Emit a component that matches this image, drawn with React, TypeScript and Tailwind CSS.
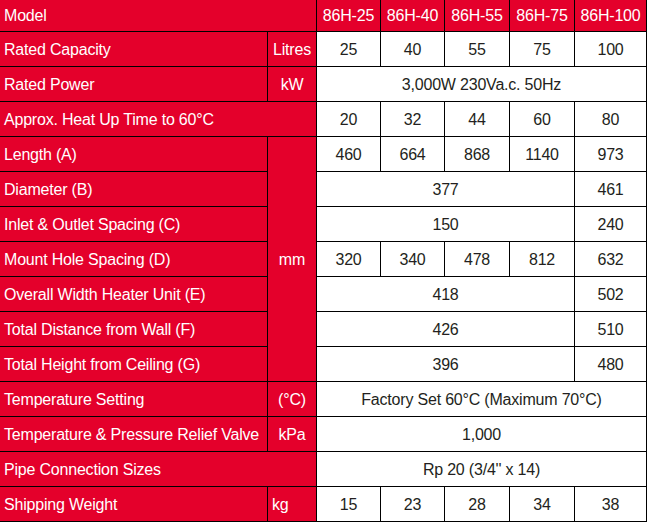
import React from 'react';

type Cell = {
  text: string;
  span?: number;
  rowSpan?: number;
  red?: boolean;
  align?: 'left' | 'center';
};

const red = 'bg-[#e4002b] text-white';
const white = 'bg-white text-[#231f20]';

const rows: Cell[][] = [
  [
    { text: 'Model', span: 2, red: true, align: 'left' },
    { text: '86H-25', red: true },
    { text: '86H-40', red: true },
    { text: '86H-55', red: true },
    { text: '86H-75', red: true },
    { text: '86H-100', red: true },
  ],
  [
    { text: 'Rated Capacity', red: true, align: 'left' },
    { text: 'Litres', red: true },
    { text: '25' }, { text: '40' }, { text: '55' }, { text: '75' }, { text: '100' },
  ],
  [
    { text: 'Rated Power', red: true, align: 'left' },
    { text: 'kW', red: true },
    { text: '3,000W 230Va.c. 50Hz', span: 5 },
  ],
  [
    { text: 'Approx. Heat Up Time to 60°C', span: 2, red: true, align: 'left' },
    { text: '20' }, { text: '32' }, { text: '44' }, { text: '60' }, { text: '80' },
  ],
  [
    { text: 'Length (A)', red: true, align: 'left' },
    { text: 'mm', red: true, rowSpan: 7 },
    { text: '460' }, { text: '664' }, { text: '868' }, { text: '1140' }, { text: '973' },
  ],
  [
    { text: 'Diameter (B)', red: true, align: 'left' },
    { text: '377', span: 4 }, { text: '461' },
  ],
  [
    { text: 'Inlet & Outlet Spacing (C)', red: true, align: 'left' },
    { text: '150', span: 4 }, { text: '240' },
  ],
  [
    { text: 'Mount Hole Spacing (D)', red: true, align: 'left' },
    { text: '320' }, { text: '340' }, { text: '478' }, { text: '812' }, { text: '632' },
  ],
  [
    { text: 'Overall Width Heater Unit (E)', red: true, align: 'left' },
    { text: '418', span: 4 }, { text: '502' },
  ],
  [
    { text: 'Total Distance from Wall (F)', red: true, align: 'left' },
    { text: '426', span: 4 }, { text: '510' },
  ],
  [
    { text: 'Total Height from Ceiling (G)', red: true, align: 'left' },
    { text: '396', span: 4 }, { text: '480' },
  ],
  [
    { text: 'Temperature Setting', red: true, align: 'left' },
    { text: '(°C)', red: true },
    { text: 'Factory Set 60°C (Maximum 70°C)', span: 5 },
  ],
  [
    { text: 'Temperature & Pressure Relief Valve', red: true, align: 'left' },
    { text: 'kPa', red: true },
    { text: '1,000', span: 5 },
  ],
  [
    { text: 'Pipe Connection Sizes', span: 2, red: true, align: 'left' },
    { text: 'Rp 20 (3/4\'\' x 14)', span: 5 },
  ],
  [
    { text: 'Shipping Weight', red: true, align: 'left' },
    { text: 'kg', red: true, align: 'left' },
    { text: '15' }, { text: '23' }, { text: '28' }, { text: '34' }, { text: '38' },
  ],
];

const colSpan: Record<number, string> = {
  1: 'col-span-1',
  2: 'col-span-2',
  4: 'col-span-4',
  5: 'col-span-5',
};

export default function App() {
  return (
    <div className="w-[647px] h-[523px] bg-white overflow-hidden font-['Liberation_Sans',Arial,sans-serif] text-[16px] tracking-[-0.2px]">
      <div className="grid grid-cols-[268px_49px_64px_64px_65px_65px_72px] grid-rows-[32px_repeat(14,35px)]">
        {rows.map((row, r) =>
          row.map((c, i) => (
            <div
              key={`${r}-${i}`}
              className={[
                'flex items-center border-b border-r border-black px-[4px] pt-[1px] whitespace-nowrap',
                c.red ? red : white,
                c.align === 'left' ? 'justify-start' : 'justify-center',
                colSpan[c.span ?? 1],
                c.rowSpan === 7 ? 'row-span-7' : '',
              ].join(' ')}
            >
              {c.text}
            </div>
          ))
        )}
      </div>
    </div>
  );
}
